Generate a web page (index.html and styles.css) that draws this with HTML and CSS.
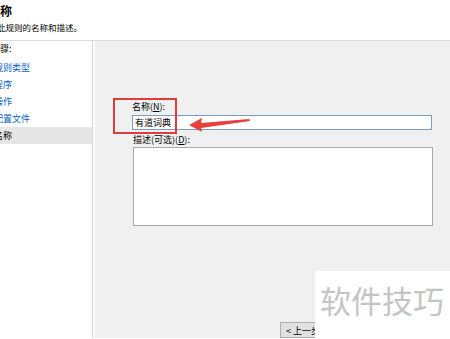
FILE: index.html
```html
<!DOCTYPE html>
<html lang="zh-CN">
<head>
    <meta charset="UTF-8">
    <title>新建入站规则向导</title>
    <link rel="stylesheet" href="styles.css">
</head>
<body>
    <div class="wizard">
        <div class="head">
            <h1>名称</h1>
            <p>此规则的名称和描述。</p>
        </div>
        <div class="main">
            <div class="steps">
                <div class="steps-title">步骤:</div>
                <a class="step">规则类型</a>
                <a class="step">程序</a>
                <a class="step">操作</a>
                <a class="step">配置文件</a>
                <a class="step active">名称</a>
            </div>
            <div class="pane">
                <label class="field-label" for="ruleName">名称(<u>N</u>):</label>
                <input type="text" id="ruleName" class="input-field" value="有道词典">
                <label class="field-label desc-label" for="ruleDesc">描述(可选)(<u>D</u>):</label>
                <textarea id="ruleDesc" class="text-area"></textarea>
                <button class="btn">&lt; 上一步(<u>B</u>)</button>
            </div>
        </div>

        <!-- annotation drawn on top of the screenshot -->
        <div class="mark-box"></div>
        <svg class="mark-arrow" width="64" height="16" viewBox="0 0 64 16">
            <polygon points="0,8 13,1 12,6 60,2 61,4 12,11 13,15" fill="#e8403c"/>
        </svg>

        <div class="watermark">软件技巧</div>
    </div>
</body>
</html>
```

FILE: styles.css
```css
body {
    margin: 0;
    padding: 0;
    font-family: "Noto Sans CJK SC", "Noto Sans", sans-serif;
    font-size: 9px;
    color: #000;
    background-color: #fff;
    overflow: hidden;
}

.wizard {
    position: relative;
    width: 450px;
    height: 339px;
    overflow: hidden;
}

.head {
    height: 41px;
    border-bottom: 1px solid #dcdcdc;
    background-color: #fff;
    box-sizing: border-box;
    padding-top: 3px;
}

.head h1 {
    margin: 0 0 0 -12px;
    font-size: 12px;
    line-height: 16px;
    font-weight: bold;
}

.head p {
    margin: 2px 0 0 -3px;
    font-size: 8.5px;
    line-height: 12px;
}

.main {
    display: flex;
    height: 297px;
}

.steps {
    width: 92px;
    border-right: 1px solid #d9d9d9;
    box-shadow: 1px 0 0 #fafafa;
    background-color: #fff;
    display: flex;
    flex-direction: column;
}

.steps-title {
    height: 18px;
    line-height: 15px;
    margin-left: -9px;
}

.step {
    display: block;
    height: 17px;
    line-height: 17px;
    text-indent: -6px;
    color: #0a5fc4;
}

.step.active {
    color: #000;
    background-color: #e6e6e6;
}

.pane {
    flex: 1;
    margin-left: 2px;
    background-color: #f0f0f0;
    padding: 60px 0 0 37px;
    display: flex;
    flex-direction: column;
    align-items: flex-start;
}

.field-label {
    display: block;
    line-height: 12px;
    margin-bottom: 2px;
}

.desc-label {
    margin-top: 4px;
    margin-bottom: 1px;
    margin-left: 1px;
}

.input-field {
    width: 300px;
    height: 15px;
    box-sizing: border-box;
    border: 1px solid #7a9ebf;
    padding: 0 2px;
    font-family: inherit;
    font-size: 9px;
    color: #000;
    background-color: #fff;
    outline: none;
}

.text-area {
    width: 300px;
    height: 80px;
    box-sizing: border-box;
    border: 1px solid #a9a9a9;
    margin: 0 0 0 1px;
    padding: 0;
    resize: none;
    background-color: #fff;
}

.btn {
    margin: 96px 0 0 148px;
    height: 16px;
    padding: 0 5px;
    border: 1px solid #adadad;
    background-color: #e1e1e1;
    font-family: inherit;
    font-size: 9px;
    line-height: 13px;
    color: #000;
}

.mark-box {
    position: absolute;
    left: 113px;
    top: 98px;
    width: 64px;
    height: 36px;
    border: 2px solid #e03c3c;
    box-sizing: border-box;
}

.mark-arrow {
    position: absolute;
    left: 189px;
    top: 117px;
}

.watermark {
    position: absolute;
    left: 315px;
    top: 271px;
    width: 135px;
    height: 68px;
    background-color: #fff;
    color: #c4c4c4;
    font-size: 31px;
    line-height: 34px;
    padding: 12px 0 0 5px;
    box-sizing: border-box;
    white-space: nowrap;
}
```
